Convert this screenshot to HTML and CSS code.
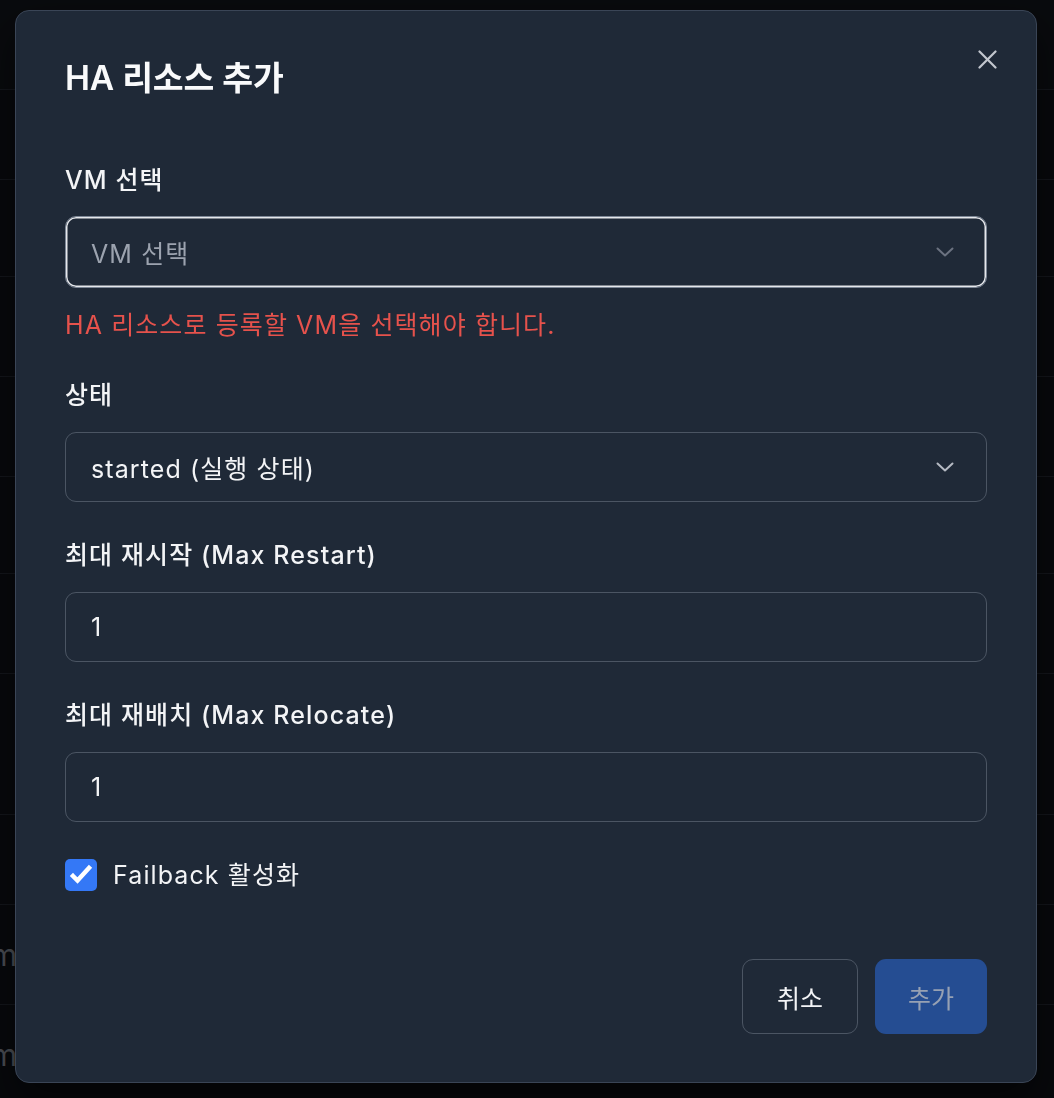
FILE: index.html
```html
<!DOCTYPE html>
<html lang="ko">
<head>
<meta charset="utf-8">
<title>HA 리소스 추가</title>
<link rel="stylesheet" href="styles.css">
</head>
<body>
<div class="page">
  <div class="bg-row row-head"></div>
  <div class="bg-row row-a"></div>
  <div class="bg-row row-b"></div>
  <div class="bg-row row-c"></div>
  <div class="bg-row row-c"></div>
  <div class="bg-row row-b"></div>
  <div class="bg-row row-c"></div>
  <div class="bg-row row-d"></div>
  <div class="bg-row row-a"></div>
  <div class="bg-row row-c"><span class="cell-text">vm</span></div>
  <div class="bg-row row-c"><span class="cell-text">vm</span></div>
</div>

<div class="overlay">
  <div class="modal" role="dialog" aria-labelledby="modal-title">
    <button class="close" aria-label="닫기">
      <svg width="19" height="19" viewBox="0 0 19 19" fill="none" stroke="currentColor" stroke-width="2.2" stroke-linecap="round"><line x1="1.5" y1="1.5" x2="17.5" y2="17.5"/><line x1="17.5" y1="1.5" x2="1.5" y2="17.5"/></svg>
    </button>
    <h2 id="modal-title" class="title">HA 리소스 추가</h2>

    <div class="field first">
      <label class="label">VM 선택</label>
      <div class="control focused">
        <span class="placeholder">VM 선택</span>
        <svg class="chev chev-dim" width="18" height="10" viewBox="0 0 18 10" fill="none" stroke="currentColor" stroke-width="2" stroke-linecap="round" stroke-linejoin="round"><polyline points="1.5,1.5 9,8.5 16.5,1.5"/></svg>
      </div>
      <p class="error">HA 리소스로 등록할 VM을 선택해야 합니다.</p>
    </div>

    <div class="field">
      <label class="label">상태</label>
      <div class="control">
        <span class="value">started (실행 상태)</span>
        <svg class="chev" width="18" height="10" viewBox="0 0 18 10" fill="none" stroke="currentColor" stroke-width="2" stroke-linecap="round" stroke-linejoin="round"><polyline points="1.5,1.5 9,8.5 16.5,1.5"/></svg>
      </div>
    </div>

    <div class="field">
      <label class="label">최대 재시작 (Max Restart)</label>
      <div class="control"><span class="value">1</span></div>
    </div>

    <div class="field">
      <label class="label">최대 재배치 (Max Relocate)</label>
      <div class="control"><span class="value">1</span></div>
    </div>

    <div class="check-row">
      <span class="checkbox">
        <svg width="32" height="32" viewBox="0 0 32 32" fill="none" stroke="#fff" stroke-width="4.5" stroke-linecap="square" stroke-linejoin="miter"><polyline points="8,17 12.5,21.5 24,9"/></svg>
      </span>
      <span class="check-label">Failback 활성화</span>
    </div>

    <div class="actions">
      <button class="btn btn-cancel">취소</button>
      <button class="btn btn-add" disabled>추가</button>
    </div>
  </div>
</div>
</body>
</html>
```

FILE: styles.css
```css
* { box-sizing: border-box; }

html, body {
  margin: 0;
  padding: 0;
  background: #0a0c10;
  font-family: Inter, "Noto Sans CJK KR", sans-serif;
  overflow: hidden;
}

.page {
  width: 1054px;
  height: 1098px;
  display: flex;
  flex-direction: column;
}

.bg-row {
  border-bottom: 1px solid #1a1d24;
  display: flex;
  align-items: center;
  flex-shrink: 0;
}
.row-head { height: 90px; background: #0c0e12; }
.row-a { height: 90px; }
.row-b { height: 97px; }
.row-c { height: 100px; }
.row-d { height: 141px; }

.cell-text {
  color: #62666e;
  font-size: 30px;
  margin-left: -26px;
}

.overlay {
  position: fixed;
  inset: 0;
  background: rgba(0, 0, 0, 0.25);
}

.modal {
  position: absolute;
  left: 15px;
  top: 10px;
  width: 1022px;
  height: 1073px;
  background: #1f2937;
  border: 1px solid #3a4556;
  border-radius: 14px;
  padding: 47px 49px 0 49px;
  display: flex;
  flex-direction: column;
  box-shadow: 0 20px 40px rgba(0,0,0,0.5);
}

.close {
  position: absolute;
  right: 39px;
  top: 39px;
  width: 19px;
  height: 19px;
  padding: 0;
  border: 0;
  background: transparent;
  color: #c3c7ce;
  display: flex;
}

.title {
  margin: 0;
  font-size: 33.5px;
  line-height: 40px;
  font-weight: 600;
  color: #f9fafb;
  letter-spacing: -0.2px;
}

.field {
  display: flex;
  flex-direction: column;
  margin-top: 37px;
}
.field.first { margin-top: 66px; }

.label {
  font-size: 25px;
  line-height: 32px;
  font-weight: 500;
  letter-spacing: 1.1px;
  color: #f3f4f6;
  margin-bottom: 21px;
}

.control {
  height: 70px;
  border: 1px solid #4b5563;
  border-radius: 11px;
  display: flex;
  align-items: center;
  justify-content: space-between;
  padding: 0 32px 0 25px;
  font-size: 25px;
  letter-spacing: 1.1px;
  color: #f3f4f6;
}

.control.focused {
  height: 72px;
  margin-top: -1px;
  margin-bottom: -1px;
  border-color: #7d8796;
  box-shadow: inset 0 0 0 1.5px #e5e7eb;
}

.placeholder { color: #9ca3af; }
.value { color: #f3f4f6; }

.chev { color: #b5bac3; }
.chev-dim { color: #6b7280; }

.error {
  margin: 22px 0 1px 0;
  font-size: 25px;
  line-height: 32px;
  letter-spacing: 1.1px;
  color: #e6524c;
}

.check-row {
  display: flex;
  align-items: center;
  height: 32px;
  margin-top: 37px;
  gap: 16px;
}

.checkbox {
  width: 32px;
  height: 32px;
  border-radius: 5px;
  background: #3478f6;
  display: flex;
}

.check-label {
  font-size: 25px;
  line-height: 32px;
  letter-spacing: 1.1px;
  color: #f3f4f6;
}

.actions {
  display: flex;
  justify-content: flex-end;
  gap: 17px;
  margin-top: 68px;
}

.btn {
  height: 75px;
  border-radius: 11px;
  font-family: Inter, "Noto Sans CJK KR", sans-serif;
  font-size: 25px;
  padding: 0;
}

.btn-cancel {
  width: 116px;
  background: transparent;
  border: 1px solid #4b5563;
  color: #f3f4f6;
}

.btn-add {
  width: 112px;
  background: #254d92;
  border: 0;
  color: #97a1b3;
}
```
